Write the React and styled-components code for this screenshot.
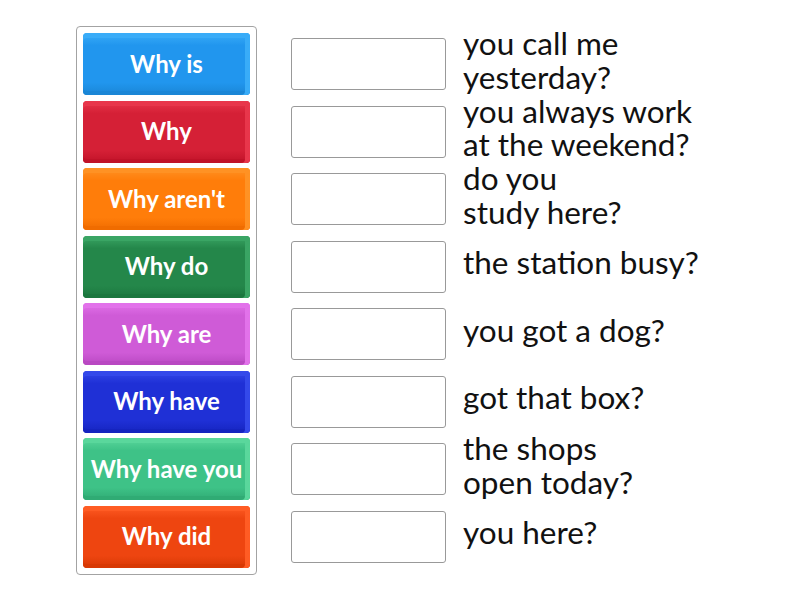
import React from "react";
import styled, { createGlobalStyle } from "styled-components";

const Global = createGlobalStyle`
  html, body { margin: 0; padding: 0; background: #fff; }
  body { font-family: Lato, "Open Sans", sans-serif; }
`;

const Page = styled.div`
  display: flex;
  align-items: flex-start;
  padding: 26px 0 0 76px;
  width: 800px;
  height: 600px;
  box-sizing: border-box;
`;

const Tray = styled.div`
  width: 181px;
  box-sizing: border-box;
  border: 1px solid #a3a3a3;
  border-radius: 4px;
  padding: 6px;
  display: flex;
  flex-direction: column;
  gap: 5.5px;
`;

const Tile = styled.div`
  height: 62px;
  border-radius: 4px;
  background: linear-gradient(${(p) => p.$top}, ${(p) => p.$bg} 20%, ${(p) => p.$bg} 80%, ${(p) => p.$bottom});
  box-shadow: inset 0 5px 0 ${(p) => p.$top}, inset -5px 0 0 ${(p) => p.$top}, inset 0 -4px 0 ${(p) => p.$bottom};
  display: flex;
  align-items: center;
  justify-content: center;
  color: #fff;
  font-size: 24px;
  font-weight: 700;
  white-space: nowrap;
  padding-bottom: 2px;
  box-sizing: border-box;
`;

const Targets = styled.div`
  margin-left: 34px;
  padding-top: 7px;
  display: flex;
  flex-direction: column;
  gap: 5.5px;
`;

const Row = styled.div`
  height: 62px;
  display: flex;
  align-items: center;
  gap: 17px;
`;

const Slot = styled.div`
  width: 155px;
  height: 52px;
  box-sizing: border-box;
  border: 1px solid #999;
  border-radius: 3px;
  background: #fff;
  flex: none;
`;

const Clue = styled.div`
  font-size: 31.5px;
  line-height: 33.5px;
  color: #111;
  white-space: pre-line;
  margin-top: -7px;
`;

const tiles = [
  { t: "Why is", bg: "#2196ee", top: "#39acf8", bottom: "#1a86d6" },
  { t: "Why", bg: "#d52036", top: "#e8364b", bottom: "#c01228" },
  { t: "Why aren't", bg: "#ff7d0a", top: "#ff9224", bottom: "#f06c00" },
  { t: "Why do", bg: "#24874a", top: "#3aa564", bottom: "#1b773e" },
  { t: "Why are", bg: "#cf5bd7", top: "#e272ea", bottom: "#b948c2" },
  { t: "Why have", bg: "#1f30d6", top: "#3449ea", bottom: "#1524bf" },
  { t: "Why have you", bg: "#3ec287", top: "#5ad79c", bottom: "#30ab74" },
  { t: "Why did", bg: "#ee4510", top: "#ff5c24", bottom: "#d83904" },
];

const clues = [
  "you call me\nyesterday?",
  "you always work\nat the weekend?",
  "do you\nstudy here?",
  "the station busy?",
  "you got a dog?",
  "got that box?",
  "the shops\nopen today?",
  "you here?",
];

export default function App() {
  return (
    <>
      <Global />
      <Page>
        <Tray>
          {tiles.map((x) => (
            <Tile key={x.t} $bg={x.bg} $top={x.top} $bottom={x.bottom}>
              {x.t}
            </Tile>
          ))}
        </Tray>
        <Targets>
          {clues.map((c) => (
            <Row key={c}>
              <Slot />
              <Clue>{c}</Clue>
            </Row>
          ))}
        </Targets>
      </Page>
    </>
  );
}
